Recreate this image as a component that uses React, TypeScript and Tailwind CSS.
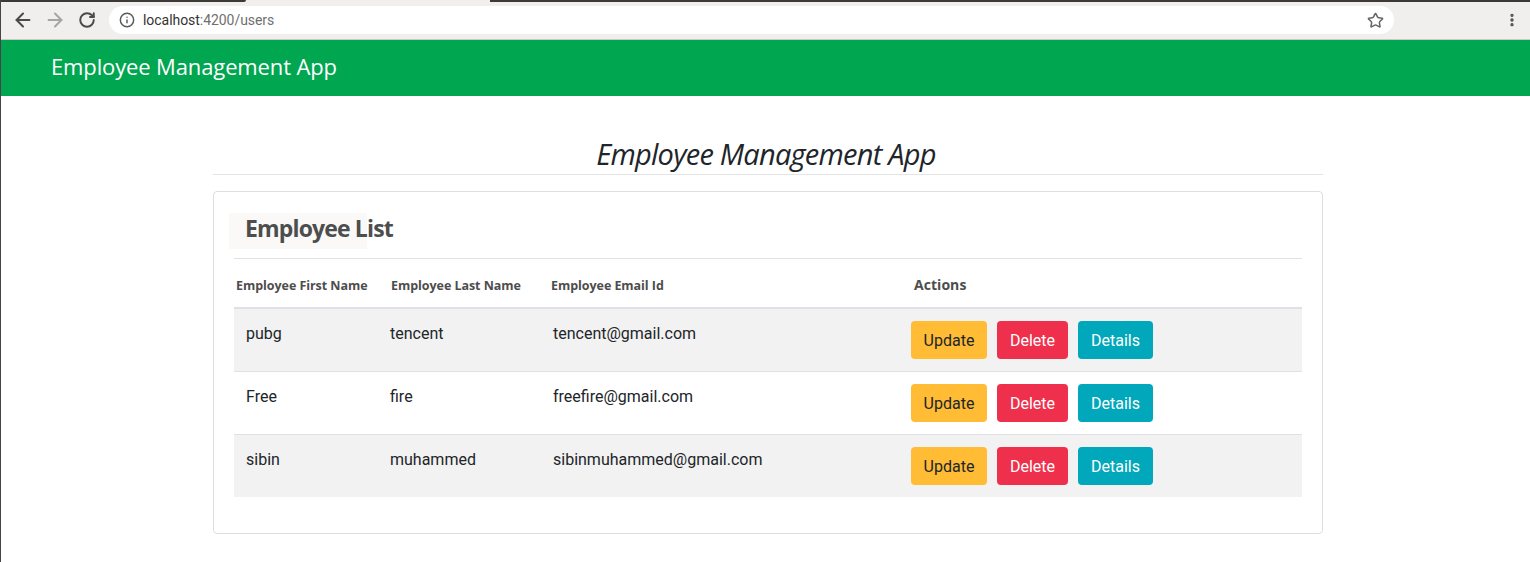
import { ArrowLeft, ArrowRight, Info, MoreVertical, RotateCw, Star } from "lucide-react";

const employees = [
  { first: "pubg", last: "tencent", email: "tencent@gmail.com", striped: true },
  { first: "Free", last: "fire", email: "freefire@gmail.com", striped: false },
  { first: "sibin", last: "muhammed", email: "sibinmuhammed@gmail.com", striped: true },
];

const myriad = "font-['Open_Sans',sans-serif]";

function BrowserBar() {
  return (
    <div className="relative flex h-[40px] items-center border-b border-[#c9c9c7] bg-[#f1efee] pt-[1px] text-[#4a4a4a]">
      <div className="absolute left-0 top-0 h-[2px] w-[245px] rounded-br bg-[#3c3a36]" />
      <div className="absolute right-0 top-0 h-[2px] w-[1040px] bg-[#3c3a36]" />
      <div className="flex w-[108px] items-center pl-[11px]">
        <ArrowLeft className="size-[22px]" strokeWidth={2.2} />
        <ArrowRight className="ml-[10px] size-[22px] text-[#a5a5a5]" strokeWidth={2.2} />
        <RotateCw className="ml-[12px] size-[18px]" strokeWidth={2.6} />
      </div>
      <div className="flex h-[28px] w-[1285px] items-center rounded-full bg-white pl-[10px] pr-[10px]">
        <Info className="size-[16px] text-[#5a5a5a]" strokeWidth={2.2} />
        <span className="ml-[8px] pt-[1px] font-['Roboto',sans-serif] text-[14px] tracking-[-0.05px] text-[#333333]">
          localhost<span className="text-[#6f6f6f]">:4200/users</span>
        </span>
        <Star className="ml-auto size-[17px] text-[#666666]" strokeWidth={2.2} />
      </div>
      <MoreVertical className="ml-[110px] size-[16px]" strokeWidth={3} />
    </div>
  );
}

function Btn({ label, color }: { label: string; color: string }) {
  return (
    <button className={`h-[38px] rounded-[4px] pt-[2px] font-['Roboto',sans-serif] text-[16px] ${color}`}>
      {label}
    </button>
  );
}

export default function App() {
  return (
    <div className="h-[562px] overflow-hidden border-l border-[#4a4248] bg-white">
      <BrowserBar />
      <header className={`flex h-[56px] items-center bg-[#00a650] pb-[4px] pl-[50px] text-[22px] text-white ${myriad}`}>
        <span className="tracking-[-0.13px]">Employee Management App</span>
      </header>

      <main className="ml-[212px] w-[1110px] pt-[38px]">
        <h2
          className={`h-[41px] border-b border-[#e2e4e6] pr-[4px] text-center text-[29px] leading-[39px] text-[#212529] italic tracking-[-0.77px] ${myriad}`}
        >
          Employee Management App
        </h2>

        <section className="mt-[16px] h-[343px] rounded-[4px] border border-[#dcdfe2] pl-[20px] pr-[20px] pt-[21px]">
          <div className="border-b border-[#dee2e6] pb-[9px]">
            <h3
              className={`h-[36px] w-[138px] whitespace-nowrap bg-[#faf9f8] pl-[16px] text-[23px] font-bold leading-[30px] tracking-[-0.85px] text-[#4d4d4d] -ml-[5px] ${myriad}`}
            >
              Employee List
            </h3>
          </div>

          <table className="w-full table-fixed border-collapse">
            <thead>
              <tr className={`h-[49px] border-b-2 border-[#dee2e6] text-left font-bold text-[#4d4d4d] ${myriad}`}>
                <th className="w-[154px] pl-[2px] pt-[6px] text-[12.5px] tracking-[-0.05px]">Employee First Name</th>
                <th className="w-[160px] pl-[3px] pt-[6px] text-[12.5px] tracking-[-0.05px]">Employee Last Name</th>
                <th className="w-[360px] pl-[3px] pt-[6px] text-[12.5px] tracking-[-0.05px]">Employee Email Id</th>
                <th className="pl-[6px] pt-[2px] text-[14px] tracking-[0.05px]">Actions</th>
              </tr>
            </thead>
            <tbody className="font-['Roboto',sans-serif] text-[16px] text-[#212529]">
              {employees.map((e, i) => (
                <tr
                  key={e.email}
                  className={`${i > 0 ? "h-[63px] border-t border-[#dee2e6]" : "h-[63px]"} ${e.striped ? "bg-[#f2f2f2]" : "bg-white"}`}
                >
                  <td className="pb-[12px] pl-[12px]">{e.first}</td>
                  <td className="pb-[12px] pl-[2px]">{e.last}</td>
                  <td className="pb-[12px] pl-[5px]">{e.email}</td>
                  <td className="pl-[3px]">
                    <div className="grid grid-cols-[76px_71px_75px] gap-[10px]">
                      <Btn label="Update" color="bg-[#ffbc34] text-[#212529]" />
                      <Btn label="Delete" color="bg-[#ef304c] text-white" />
                      <Btn label="Details" color="bg-[#01a7bb] text-white" />
                    </div>
                  </td>
                </tr>
              ))}
            </tbody>
          </table>
        </section>
      </main>
    </div>
  );
}
